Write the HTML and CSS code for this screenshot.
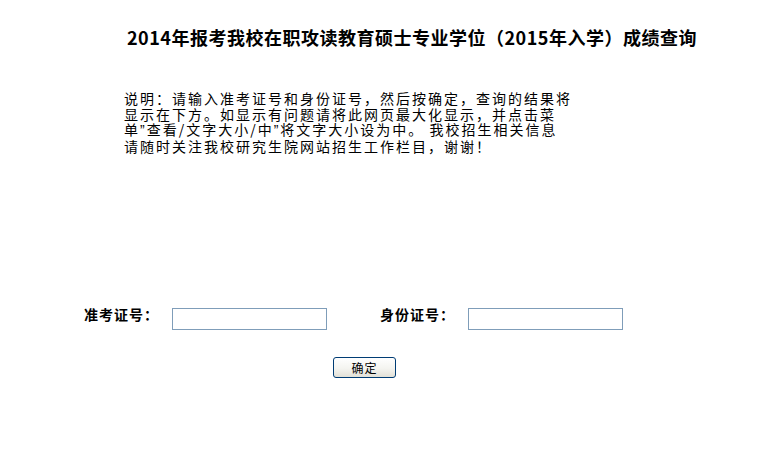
FILE: index.html
```html
<!DOCTYPE html>
<html lang="zh-CN">
<head>
<meta charset="utf-8">
<title>成绩查询</title>
<link rel="stylesheet" href="styles.css">
</head>
<body>
<div class="page">
  <h1 class="title">2014年报考我校在职攻读教育硕士专业学位（2015年入学）成绩查询</h1>
  <p class="note">说明：请输入准考证号和身份证号，然后按确定，查询的结果将<br>显示在下方。如显示有问题请将此网页最大化显示，并点击菜<br>单<span class="quote">”</span>查看/文字大小/中<span class="quote">”</span>将文字大小设为中。 我校招生相关信息<br>请随时关注我校研究生院网站招生工作栏目，谢谢！</p>
  <form class="query">
    <div class="fields">
      <label class="field-label" for="zkz">准考证号：</label>
      <input class="field-input" id="zkz" type="text">
      <label class="field-label second" for="sfz">身份证号：</label>
      <input class="field-input" id="sfz" type="text">
    </div>
    <div class="actions">
      <button class="submit" type="button">确定</button>
    </div>
  </form>
</div>
</body>
</html>
```

FILE: styles.css
```css
html, body {
  margin: 0;
  padding: 0;
  background: #ffffff;
}

body {
  font-family: "Noto Sans CJK SC", "Liberation Sans", sans-serif;
  color: #000000;
}

.page {
  width: 770px;
}

.title {
  margin: 0;
  padding: 27px 0 0 127px;
  font-size: 18px;
  line-height: 20px;
  font-weight: bold;
  letter-spacing: 0.5px;
  white-space: nowrap;
}

.note {
  margin: 44px 0 0 124px;
  font-size: 14px;
  line-height: 15.7px;
  letter-spacing: 2px;
  white-space: nowrap;
}

.quote {
  font-family: "Liberation Sans", sans-serif;
}

.query {
  margin: 153px 0 0 0;
}

.fields {
  display: flex;
  align-items: flex-start;
  padding-left: 84px;
}

.field-label {
  width: 88px;
  margin-top: -2px;
  font-size: 14px;
  line-height: 16px;
  font-weight: bold;
  letter-spacing: 1px;
  white-space: nowrap;
}

.field-label.second {
  margin-left: 53px;
}

.field-input {
  box-sizing: border-box;
  width: 155px;
  height: 22px;
  margin: 0;
  padding: 0 2px;
  border: 1px solid #7f9db9;
  background: #ffffff;
  font-size: 12px;
}

.actions {
  display: flex;
  padding: 27px 0 0 333px;
}

.submit {
  box-sizing: border-box;
  width: 63px;
  height: 21px;
  margin: 0;
  padding: 0;
  border: 1px solid #003c74;
  border-radius: 3px;
  background: linear-gradient(#ffffff 0%, #f4f4f0 55%, #e2e0d6 100%);
  font-family: "Noto Sans CJK SC", sans-serif;
  font-size: 12px;
  line-height: 19px;
  letter-spacing: 1px;
  color: #000000;
}
```
